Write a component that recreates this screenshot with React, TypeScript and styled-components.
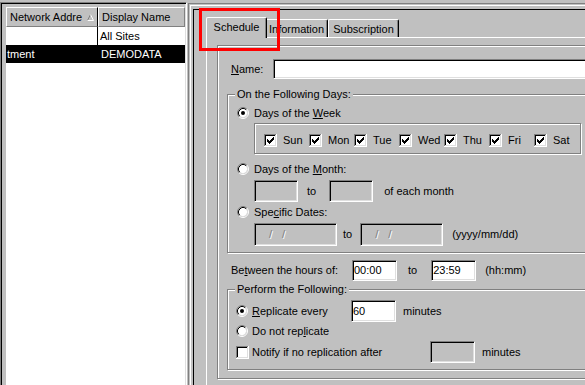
import React from "react";
import styled, { createGlobalStyle } from "styled-components";

const FACE = "#c0c0c0";
const SHADOW = "#808080";
const LIGHT = "#dfdfdf";

const Global = createGlobalStyle`
  html, body { margin: 0; padding: 0; background: ${FACE}; }
  body {
    font-family: "Liberation Sans", Arial, sans-serif;
    font-size: 11px;
    color: #000;
  }
  #root { width: 585px; height: 385px; }
`;

const Screen = styled.div`
  position: relative;
  width: 585px;
  height: 385px;
  overflow: hidden;
  background: ${FACE};
  display: flex;
  align-items: flex-start;
`;

/* ---------- left list pane ---------- */
const LeftPane = styled.div`
  flex: none;
  box-sizing: border-box;
  width: 187px;
  height: 420px;
  margin-top: 2px;
  border-style: solid;
  border-width: 1px;
  border-color: ${SHADOW} #fff #fff ${SHADOW};
  box-shadow: inset 1px 1px 0 #000, inset -1px -1px 0 ${LIGHT};
  padding: 4px 1px 0 5px;
  display: flex;
  flex-direction: column;
`;

const ListHeader = styled.div`
  display: flex;
  height: 20px;
  flex: none;
`;

const HeaderCell = styled.div<{ $w?: number }>`
  box-sizing: border-box;
  position: relative;
  ${(p) => (p.$w ? `width: ${p.$w}px; flex: none;` : "flex: 1;")}
  height: 20px;
  border-top: 1px solid #fff;
  border-left: 1px solid #fff;
  border-bottom: 1px solid ${SHADOW};
  border-right: 1px solid ${(p) => (p.$w ? "#000" : SHADOW)};
  padding-left: 3px;
  line-height: 18px;
  white-space: nowrap;
  overflow: hidden;
`;

const SortMark = styled.svg`
  position: absolute;
  left: 80px;
  top: 6px;
`;

const ListBody = styled.div`
  flex: 1;
  background: #fff;
  display: flex;
  flex-direction: column;
`;

const ListRow = styled.div<{ $selected?: boolean }>`
  display: flex;
  height: 18px;
  background: ${(p) => (p.$selected ? "#000" : "#fff")};
  color: ${(p) => (p.$selected ? "#fff" : "#000")};
`;

const ListCell = styled.div<{ $w?: number; $pad: number; $rule?: boolean }>`
  box-sizing: border-box;
  ${(p) => (p.$w ? `width: ${p.$w}px; flex: none;` : "flex: 1;")}
  padding-left: ${(p) => p.$pad}px;
  line-height: 18px;
  border-right: ${(p) => (p.$rule ? "1px solid #000" : "none")};
  white-space: nowrap;
  overflow: hidden;
`;

/* ---------- right pane ---------- */
const RightPane = styled.div`
  flex: none;
  box-sizing: border-box;
  width: 470px;
  height: 420px;
  margin: 3px 0 0 1px;
  border-top: 1px solid ${SHADOW};
  border-left: 1px solid ${SHADOW};
  padding: 1px 0 0 1px;
`;

const PaneFrame = styled.div`
  box-sizing: border-box;
  height: 100%;
  border-top: 1px solid #fff;
  border-left: 1px solid #fff;
  padding: 3px 0 0 2px;
`;

const PaneWell = styled.div`
  box-sizing: border-box;
  height: 100%;
  border-top: 1px solid #000;
  border-left: 1px solid #000;
  padding: 7px 0 0 12px;
  display: flex;
  flex-direction: column;
`;

const TabStrip = styled.div`
  display: flex;
  align-items: flex-end;
  height: 20px;
  padding-left: 2px;
  position: relative;
  z-index: 1;
`;

const Tab = styled.div<{ $w: number; $active?: boolean }>`
  box-sizing: border-box;
  flex: none;
  position: relative;
  width: ${(p) => (p.$active ? p.$w + 4 : p.$w)}px;
  height: ${(p) => (p.$active ? 21 : 18)}px;
  margin: ${(p) => (p.$active ? "0 -2px -1px -2px" : "0")};
  z-index: ${(p) => (p.$active ? 2 : 1)};
  background: ${FACE};
  border-top: 1px solid #fff;
  border-left: 1px solid #fff;
  border-right: 1px solid #000;
  border-radius: 2px 2px 0 0;
  box-shadow: inset -1px 0 0 ${SHADOW};
  padding-top: 3px;
  line-height: 13px;
  text-align: center;
  white-space: nowrap;
`;

const TabPage = styled.div`
  flex: 1;
  border-top: 1px solid #fff;
  border-left: 1px solid #fff;
  padding: 7px 0 0 10px;
`;

const Frame = styled.div`
  box-sizing: border-box;
  width: 420px;
  border: 1px solid ${SHADOW};
  box-shadow: inset 1px 1px 0 #fff, 1px 1px 0 #fff;
  padding: 13px 0 8px 9px;
  display: flex;
  flex-direction: column;
`;

const FieldRow = styled.div<{ $h: number; $mt?: number; $ml?: number }>`
  display: flex;
  align-items: center;
  height: ${(p) => p.$h}px;
  margin-top: ${(p) => p.$mt ?? 0}px;
  margin-left: ${(p) => p.$ml ?? 0}px;
  white-space: nowrap;
`;

const Label = styled.span<{ $w?: number; $ml?: number }>`
  flex: none;
  ${(p) => (p.$w ? `width: ${p.$w}px;` : "")}
  margin-left: ${(p) => p.$ml ?? 0}px;
  line-height: 13px;
  white-space: nowrap;
`;

const Key = styled.u`
  text-decoration: underline;
  text-underline-offset: 1px;
`;

const TextBox = styled.div<{ $w?: number; $h: number; $ml?: number; $disabled?: boolean; $pad?: number }>`
  box-sizing: border-box;
  ${(p) => (p.$w ? `width: ${p.$w}px; flex: none;` : "flex: 1;")}
  height: ${(p) => p.$h}px;
  margin-left: ${(p) => p.$ml ?? 0}px;
  border-style: solid;
  border-width: 1px;
  border-color: ${SHADOW} #fff #fff ${SHADOW};
  box-shadow: inset 1px 1px 0 #000, inset -1px -1px 0 ${LIGHT};
  background: ${(p) => (p.$disabled ? FACE : "#fff")};
  padding: 0 0 0 ${(p) => p.$pad ?? 2}px;
  display: flex;
  align-items: center;
  line-height: 13px;
  white-space: pre;
  word-spacing: ${(p) => (p.$disabled ? "7px" : "0")};
  color: ${(p) => (p.$disabled ? SHADOW : "#000")};
  text-shadow: ${(p) => (p.$disabled ? "1px 1px 0 #fff" : "none")};
`;

const GroupBox = styled.div<{ $mt: number; $pl: number; $pt: number }>`
  position: relative;
  box-sizing: border-box;
  width: 400px;
  margin-top: ${(p) => p.$mt}px;
  border: 1px solid ${SHADOW};
  box-shadow: inset 1px 1px 0 #fff, 1px 1px 0 #fff;
  padding: ${(p) => p.$pt}px 0 6px ${(p) => p.$pl}px;
  display: flex;
  flex-direction: column;
`;

const GroupTitle = styled.span`
  position: absolute;
  top: -7px;
  left: 7px;
  padding: 0 2px;
  background: ${FACE};
  line-height: 13px;
  white-space: nowrap;
`;

const OptionRow = styled.div<{ $h: number; $mt?: number; $gap: number }>`
  display: flex;
  align-items: center;
  gap: ${(p) => p.$gap}px;
  height: ${(p) => p.$h}px;
  margin-top: ${(p) => p.$mt ?? 0}px;
  white-space: nowrap;
`;

const Inline = styled.div<{ $gap: number }>`
  display: flex;
  align-items: center;
  gap: ${(p) => p.$gap}px;
  flex: none;
`;

const DayBox = styled.div`
  box-sizing: border-box;
  width: 327px;
  height: 31px;
  margin: 3px 0 0 17px;
  border: 1px solid ${SHADOW};
  box-shadow: inset 1px 1px 0 #fff, 1px 1px 0 #fff;
  padding: 10px 0 0 9px;
  display: flex;
  align-items: flex-start;
`;

const DayItem = styled.div`
  flex: none;
  width: 45px;
  display: flex;
  align-items: center;
  gap: 6px;
  height: 13px;
`;

const RadioSvg = styled.svg`
  flex: none;
  display: block;
`;

const CheckSvg = styled.svg`
  flex: none;
  display: block;
`;

const Annotation = styled.div`
  position: absolute;
  left: 199px;
  top: 8px;
  width: 81px;
  height: 43px;
  box-sizing: border-box;
  border: 3px solid #ff0000;
  pointer-events: none;
  z-index: 10;
`;

const Radio = ({ checked }: { checked?: boolean }) => (
  <RadioSvg width="12" height="12" viewBox="0 0 12 12">
    <circle cx="6" cy="6" r="4.2" fill="#fff" />
    <path d="M2.11 9.89 A5.5 5.5 0 0 1 9.89 2.11" stroke={SHADOW} strokeWidth="1" fill="none" />
    <path d="M9.89 2.11 A5.5 5.5 0 0 1 2.11 9.89" stroke="#fff" strokeWidth="1" fill="none" />
    <path d="M2.82 9.18 A4.5 4.5 0 0 1 9.18 2.82" stroke="#000" strokeWidth="1" fill="none" />
    <path d="M9.18 2.82 A4.5 4.5 0 0 1 2.82 9.18" stroke={LIGHT} strokeWidth="1" fill="none" />
    {checked && <circle cx="6" cy="6" r="2" fill="#000" />}
  </RadioSvg>
);

const CHECK =
  "3,5 4,5 4,6 5,6 5,7 6,7 6,6 7,6 7,5 8,5 8,4 9,4 9,3 10,3 10,6 9,6 9,7 8,7 8,8 7,8 7,9 6,9 6,10 5,10 5,9 4,9 4,8 3,8";

const Check = ({ checked }: { checked?: boolean }) => (
  <CheckSvg width="13" height="13" viewBox="0 0 13 13" shapeRendering="crispEdges">
    <rect x="0" y="0" width="13" height="13" fill="#fff" />
    <rect x="0" y="0" width="12" height="12" fill={SHADOW} />
    <rect x="1" y="1" width="11" height="11" fill={LIGHT} />
    <rect x="1" y="1" width="10" height="10" fill="#000" />
    <rect x="2" y="2" width="9" height="9" fill="#fff" />
    {checked && <polygon points={CHECK} fill="#000" />}
  </CheckSvg>
);

const days = ["Sun", "Mon", "Tue", "Wed", "Thu", "Fri", "Sat"];

export default function App() {
  return (
    <>
      <Global />
      <Screen>
        <LeftPane>
          <ListHeader>
            <HeaderCell $w={92}>
              Network Addre
              <SortMark width="8" height="7" viewBox="0 0 8 7">
                <path d="M0.5 6.5 L3.5 0.5" stroke={SHADOW} fill="none" />
                <path d="M3.5 0.5 L6.5 6.5 L0.5 6.5" stroke="#fff" fill="none" />
              </SortMark>
            </HeaderCell>
            <HeaderCell>Display Name</HeaderCell>
          </ListHeader>
          <ListBody>
            <ListRow>
              <ListCell $w={92} $pad={1} $rule />
              <ListCell $pad={2}>All Sites</ListCell>
            </ListRow>
            <ListRow $selected>
              <ListCell $w={92} $pad={1}>tment</ListCell>
              <ListCell $pad={3}>DEMODATA</ListCell>
            </ListRow>
          </ListBody>
        </LeftPane>

        <RightPane>
          <PaneFrame>
            <PaneWell>
              <TabStrip>
                <Tab $w={57} $active>Schedule</Tab>
                <Tab $w={63}>Information</Tab>
                <Tab $w={71}>Subscription</Tab>
              </TabStrip>
              <TabPage>
                <Frame>
                  <FieldRow $h={20} $ml={4}>
                    <Label $w={42}>
                      <Key>N</Key>ame:
                    </Label>
                    <TextBox $h={20} />
                  </FieldRow>

                  <GroupBox $mt={15} $pl={9} $pt={11}>
                    <GroupTitle>On the Following Days:</GroupTitle>
                    <OptionRow $h={14} $gap={5}>
                      <Radio checked />
                      <Label>
                        Days of the <Key>W</Key>eek
                      </Label>
                    </OptionRow>
                    <DayBox>
                      {days.map((d) => (
                        <DayItem key={d}>
                          <Check checked />
                          <Label>{d}</Label>
                        </DayItem>
                      ))}
                    </DayBox>
                    <OptionRow $h={14} $mt={8} $gap={5}>
                      <Radio />
                      <Label>
                        Days of the <Key>M</Key>onth:
                      </Label>
                    </OptionRow>
                    <FieldRow $h={22} $mt={4}>
                      <TextBox $w={44} $h={22} $ml={17} $disabled />
                      <Label $ml={9}>to</Label>
                      <TextBox $w={44} $h={22} $ml={13} $disabled />
                      <Label $ml={11}>of each month</Label>
                    </FieldRow>
                    <OptionRow $h={14} $mt={3} $gap={5}>
                      <Radio />
                      <Label>
                        Spe<Key>c</Key>ific Dates:
                      </Label>
                    </OptionRow>
                    <FieldRow $h={23} $mt={4}>
                      <TextBox $w={83} $h={23} $ml={17} $disabled $pad={14}>
                        / /
                      </TextBox>
                      <Label $ml={6}>to</Label>
                      <TextBox $w={83} $h={23} $ml={8} $disabled $pad={14}>
                        / /
                      </TextBox>
                      <Label $ml={9}>(yyyy/mm/dd)</Label>
                    </FieldRow>
                  </GroupBox>

                  <FieldRow $h={21} $mt={7} $ml={4}>
                    <Label $w={121}>
                      Be<Key>t</Key>ween the hours of:
                    </Label>
                    <TextBox $w={45} $h={21} $pad={1}>
                      00:00
                    </TextBox>
                    <Label $ml={11}>to</Label>
                    <TextBox $w={45} $h={21} $ml={14} $pad={1}>
                      23:59
                    </TextBox>
                    <Label $ml={9}>(hh:mm)</Label>
                  </FieldRow>

                  <GroupBox $mt={8} $pl={8} $pt={10}>
                    <GroupTitle>Perform the Following:</GroupTitle>
                    <OptionRow $h={22} $gap={0}>
                      <Inline $gap={4}>
                        <Radio checked />
                        <Label $w={99}>
                          <Key>R</Key>eplicate every
                        </Label>
                      </Inline>
                      <TextBox $w={45} $h={22} $pad={1}>
                        60
                      </TextBox>
                      <Label $ml={7}>minutes</Label>
                    </OptionRow>
                    <OptionRow $h={14} $mt={2} $gap={4}>
                      <Radio />
                      <Label>
                        Do not rep<Key>l</Key>icate
                      </Label>
                    </OptionRow>
                    <OptionRow $h={22} $mt={3} $gap={0}>
                      <Inline $gap={3}>
                        <Check />
                        <Label $w={178}>Notify if no replication after</Label>
                      </Inline>
                      <TextBox $w={45} $h={22} $disabled />
                      <Label $ml={7}>minutes</Label>
                    </OptionRow>
                  </GroupBox>
                </Frame>
              </TabPage>
            </PaneWell>
          </PaneFrame>
        </RightPane>

        <Annotation />
      </Screen>
    </>
  );
}
